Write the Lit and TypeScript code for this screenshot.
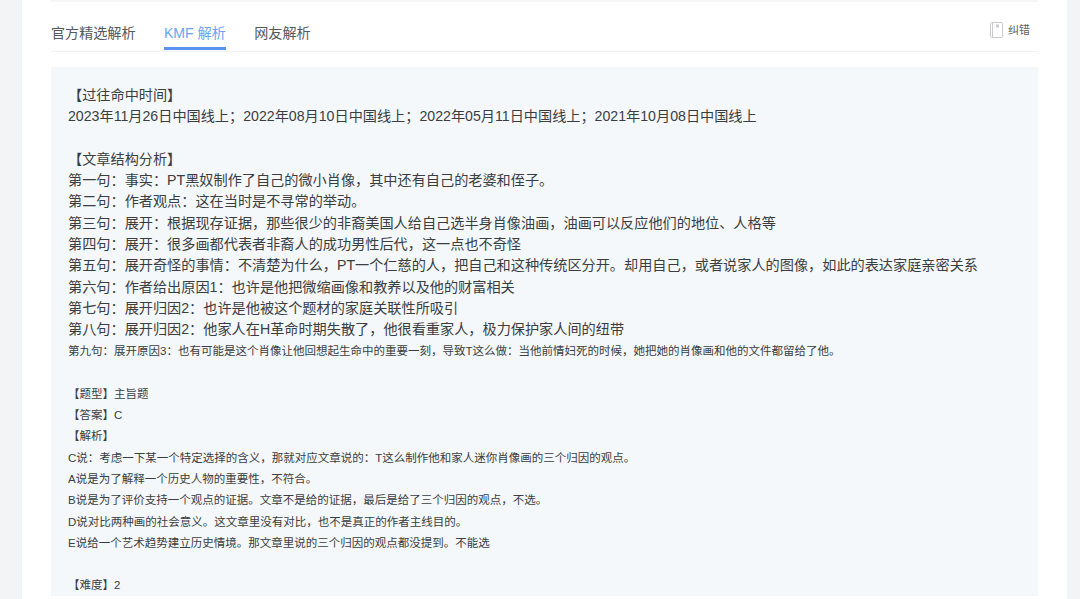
import { LitElement, html, css } from "lit";
import { customElement } from "lit/decorators.js";

const big = (t: string) => ({ t, s: false });
const small = (t: string) => ({ t, s: true });
const lines = [
  big("\u3010过往命中时间\u3011"),
  big("2023年11月26日中国线上；2022年08月10日中国线上；2022年05月11日中国线上；2021年10月08日中国线上"),
  big(""),
  big("\u3010文章结构分析\u3011"),
  big("第一句：事实：PT黑奴制作了自己的微小肖像，其中还有自己的老婆和侄子。"),
  big("第二句：作者观点：这在当时是不寻常的举动。"),
  big("第三句：展开：根据现存证据，那些很少的非裔美国人给自己选半身肖像油画，油画可以反应他们的地位、人格等"),
  big("第四句：展开：很多画都代表者非裔人的成功男性后代，这一点也不奇怪"),
  big("第五句：展开奇怪的事情：不清楚为什么，PT一个仁慈的人，把自己和这种传统区分开。却用自己，或者说家人的图像，如此的表达家庭亲密关系"),
  big("第六句：作者给出原因1：也许是他把微缩画像和教养以及他的财富相关"),
  big("第七句：展开归因2：也许是他被这个题材的家庭关联性所吸引"),
  big("第八句：展开归因2：他家人在H革命时期失散了，他很看重家人，极力保护家人间的纽带"),
  small("第九句：展开原因3：也有可能是这个肖像让他回想起生命中的重要一刻，导致T这么做：当他前情妇死的时候，她把她的肖像画和他的文件都留给了他。"),
  small(""),
  small("\u3010题型\u3011主旨题"),
  small("\u3010答案\u3011C"),
  small("\u3010解析\u3011"),
  small("C说：考虑一下某一个特定选择的含义，那就对应文章说的：T这么制作他和家人迷你肖像画的三个归因的观点。"),
  small("A说是为了解释一个历史人物的重要性，不符合。"),
  small("B说是为了评价支持一个观点的证据。文章不是给的证据，最后是给了三个归因的观点，不选。"),
  small("D说对比两种画的社会意义。这文章里没有对比，也不是真正的作者主线目的。"),
  small("E说给一个艺术趋势建立历史情境。那文章里说的三个归因的观点都没提到。不能选"),
  small(""),
  small("\u3010难度\u30112"),
];

@customElement("app-root")
export class AppRoot extends LitElement {
  static styles = css`
    :host {
      display: block;
      height: 599px;
      overflow: hidden;
      background: #f3f4f6;
      font-family: "Liberation Sans", "Noto Sans CJK SC", sans-serif;
    }
    .card {
      margin: 0 13px 0 22px;
      height: 599px;
      overflow: hidden;
      background: #fff;
      padding: 0 29px;
    }
    .topline {
      height: 2px;
      background: #f5f6f7;
    }
    .tabbar {
      display: flex;
      align-items: flex-start;
      height: 49px;
      border-bottom: 1px solid #f1f2f4;
    }
    .tab {
      height: 48px;
      box-sizing: border-box;
      padding-top: 21px;
      margin-right: 28.4px;
      font-size: 14.1px;
      line-height: 20px;
      color: #55585c;
      border-bottom: 3px solid transparent;
      white-space: nowrap;
    }
    .tab.on {
      color: #6aa5f5;
      border-bottom-color: #5b94f0;
    }
    .fix {
      margin-left: auto;
      margin-right: 8px;
      margin-top: 19px;
      display: flex;
      align-items: center;
      gap: 5px;
      font-size: 11px;
      line-height: 18px;
      color: #5c5f63;
    }
    .fix svg {
      display: block;
    }
    .panel {
      margin-top: 15px;
      background: #f4f8fb;
      padding: 18px 17px 0;
      color: #3a3d41;
    }
    .l {
      box-sizing: border-box;
      height: 21.3px;
      line-height: 21.3px;
      font-size: 14.17px;
      white-space: nowrap;
      display: flow-root;
    }
    .l.s {
      font-size: 11.5px;
      padding-top: 0.6px;
    }
  `;

  render() {
    return html`
      <div class="card">
        <div class="topline"></div>
        <div class="tabbar">
          <div class="tab">官方精选解析</div>
          <div class="tab on">KMF 解析</div>
          <div class="tab">网友解析</div>
          <div class="fix">
            <svg width="13" height="16" viewBox="0 0 13 16" fill="none" stroke="#c9cbce" stroke-width="1">
              <rect x="0.5" y="0.5" width="12" height="15" rx="1"></rect>
              <path d="M2.5 1v14"></path>
              <rect x="6" y="2.5" width="3" height="3" fill="#c9cbce" stroke="none"></rect>
            </svg>
            <span>纠错</span>
          </div>
        </div>
        <div class="panel">
          ${lines.map((x) => html`<div class="l ${x.s ? "s" : ""}">${x.t}</div>`)}
        </div>
      </div>
    `;
  }
}
